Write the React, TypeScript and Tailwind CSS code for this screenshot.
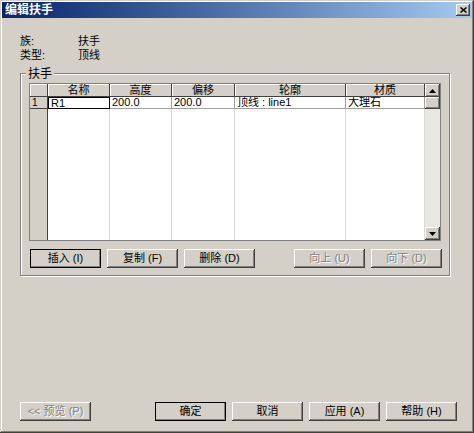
import React from "react";

const font = "font-['Liberation_Sans','Noto_Sans_CJK_SC',sans-serif]";

const raised =
  "bg-[#d4d0c8] shadow-[inset_-1px_-1px_#404040,inset_1px_1px_#ffffff,inset_-2px_-2px_#808080]";

const cols = [
  { w: "w-[62px]", label: "名称", value: "R1" },
  { w: "w-[62px]", label: "高度", value: "200.0" },
  { w: "w-[63px]", label: "偏移", value: "200.0" },
  { w: "w-[111px]", label: "轮廓", value: "顶线 : line1" },
  { w: "w-[79px]", label: "材质", value: "大理石" },
];

function Btn({
  children,
  disabled,
  primary,
  className = "",
}: {
  children: React.ReactNode;
  disabled?: boolean;
  primary?: boolean;
  className?: string;
}) {
  return (
    <div
      className={`flex h-[19px] w-[71px] items-center justify-center text-[11px] leading-none ${raised} ${
        primary ? "outline outline-1 outline-black -outline-offset-1" : ""
      } ${disabled ? "text-[#808080] [text-shadow:1px_1px_0_#ffffff]" : "text-black"} ${className}`}
    >
      {children}
    </div>
  );
}

function Grid() {
  return (
    <div className="flex h-[158px] w-[412px] border border-[#808080] bg-white">
      <div className="flex flex-col">
        {/* header */}
        <div className="flex h-[13px]">
          <div className="w-[18px] border-r border-b border-[#404040] bg-[#d4d0c8] shadow-[inset_1px_1px_#ffffff]" />
          {cols.map((c) => (
            <div
              key={c.label}
              className={`${c.w} flex items-center justify-center border-r border-b border-[#404040] bg-[#d4d0c8] text-[11px] leading-none shadow-[inset_1px_1px_#ffffff]`}
            >
              {c.label}
            </div>
          ))}
        </div>
        {/* row 1 */}
        <div className="flex h-[12px]">
          <div className="flex w-[18px] items-center border-r border-b border-[#404040] bg-[#d4d0c8] pl-[2px] text-[10px] leading-none">
            1
          </div>
          {cols.map((c, i) => (
            <div
              key={c.label}
              className={`${c.w} flex items-center truncate pl-[2px] text-[11px] leading-none ${
                i === 0 ? "border border-black" : "border-r border-b border-[#a0a0a0]"
              }`}
            >
              {c.value}
            </div>
          ))}
        </div>
        {/* empty area */}
        <div className="flex flex-1">
          <div className="w-[18px] border-r border-[#404040] bg-[#d4d0c8]" />
          {cols.map((c) => (
            <div key={c.label} className={`${c.w} border-r border-[#d8d8d8]`} />
          ))}
        </div>
      </div>
      {/* scrollbar */}
      <div className="flex w-[15px] flex-col bg-[#e9e7e2]">
        <div className={`flex h-[13px] items-center justify-center ${raised}`}>
          <svg width="7" height="4" viewBox="0 0 7 4">
            <path d="M3.5 0 L7 4 L0 4 Z" fill="#000" />
          </svg>
        </div>
        <div className={`h-[12px] ${raised}`} />
        <div className="flex-1" />
        <div className={`flex h-[13px] items-center justify-center ${raised}`}>
          <svg width="7" height="4" viewBox="0 0 7 4">
            <path d="M0 0 L7 0 L3.5 4 Z" fill="#000" />
          </svg>
        </div>
      </div>
    </div>
  );
}

export default function App() {
  return (
    <div
      className={`${font} flex h-[433px] w-[474px] flex-col bg-[#d4d0c8] p-[2px] text-black shadow-[inset_-1px_-1px_#404040,inset_1px_1px_#d4d0c8,inset_-2px_-2px_#808080,inset_2px_2px_#ffffff]`}
    >
      {/* title bar */}
      <div className="flex h-[16px] items-center bg-linear-to-r from-[#0a246a] to-[#a6caf0] pl-[3px] pr-[2px]">
        <span className="text-[12px] font-bold leading-none text-white">编辑扶手</span>
        <div className={`ml-auto flex h-[12px] w-[14px] items-center justify-center ${raised}`}>
          <svg width="7" height="6" viewBox="0 0 7 6">
            <path d="M0.5 0.5 L6.5 5.5 M6.5 0.5 L0.5 5.5" stroke="#000" strokeWidth="1.5" />
          </svg>
        </div>
      </div>

      <div className="flex flex-1 flex-col px-[18px]">
        {/* info */}
        <div className="mt-[16px] flex flex-col text-[11px] leading-[14px]">
          <div className="flex">
            <span className="w-[58px]">族:</span>
            <span>扶手</span>
          </div>
          <div className="flex">
            <span className="w-[58px]">类型:</span>
            <span>顶线</span>
          </div>
        </div>

        {/* group box */}
        <div className="relative mt-[11px] flex h-[203px] w-[430px] flex-col border border-[#808080] pt-[9px] pr-[7px] pb-[7px] pl-[8px] shadow-[inset_1px_1px_#ffffff,1px_1px_#ffffff]">
          <span className="absolute -top-[7px] left-[5px] bg-[#d4d0c8] px-[2px] text-[12px] leading-[14px]">
            扶手
          </span>
          <Grid />
          <div className="mt-[8px] flex">
            <div className="ml-[1px] flex gap-[6px]">
              <Btn primary>插入 (I)</Btn>
              <Btn>复制 (F)</Btn>
              <Btn>删除 (D)</Btn>
            </div>
            <div className="ml-auto flex gap-[6px]">
              <Btn disabled>向上 (U)</Btn>
              <Btn disabled>向下 (D)</Btn>
            </div>
          </div>
        </div>

        {/* bottom buttons */}
        <div className="mt-auto mb-[10px] flex">
          <Btn disabled>&lt;&lt; 预览 (P)</Btn>
          <div className="ml-auto mr-[-3px] flex gap-[6px]">
            <Btn primary>确定</Btn>
            <Btn>取消</Btn>
            <Btn>应用 (A)</Btn>
            <Btn>帮助 (H)</Btn>
          </div>
        </div>
      </div>
    </div>
  );
}
